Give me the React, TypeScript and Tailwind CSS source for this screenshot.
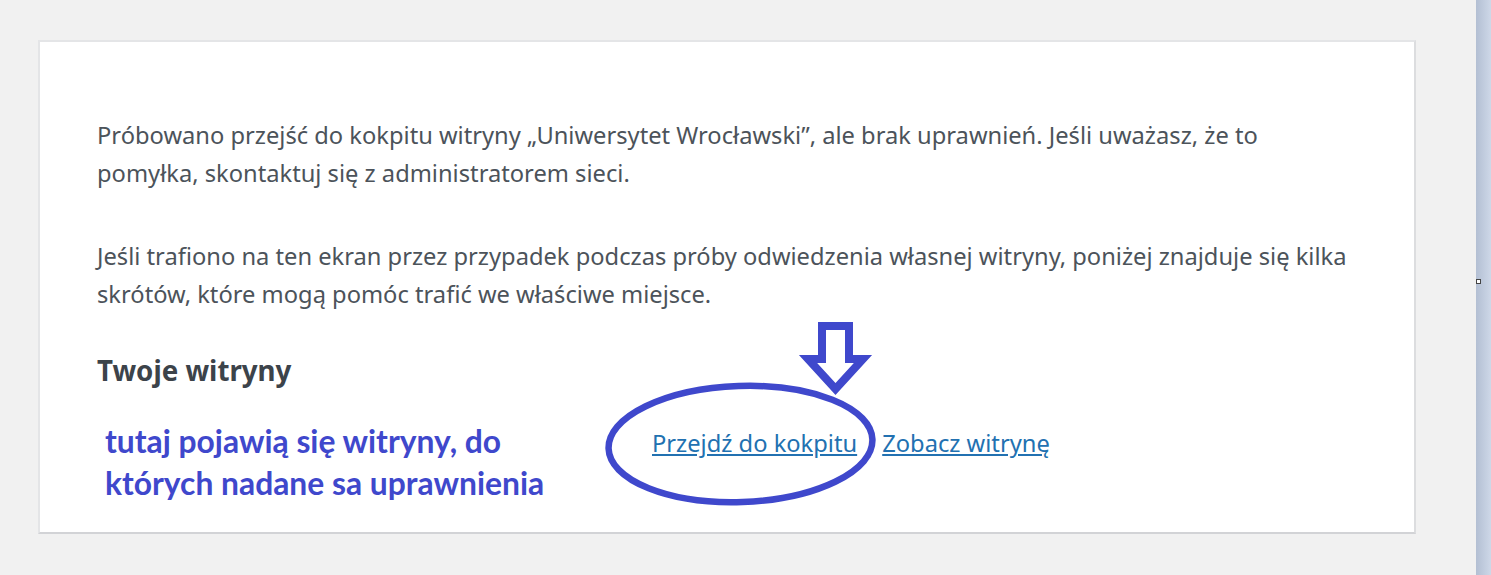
export default function App() {
  return (
    <div className="relative flex h-[575px] w-full overflow-hidden bg-[#f1f1f1] font-['Noto_Sans',sans-serif]">
      <div className="flex-1 pl-[38px] pt-[40px]">
        {/* Error card */}
        <div className="h-[494px] w-[1378px] border-2 border-[#e4e5e7] border-b-[#d2d3d6] border-r-[#dcdddf] bg-white pl-[57px] pt-[74px] text-[23.7px] leading-[38px] text-[#4c535a]">
          <p>
            Próbowano przejść do kokpitu witryny „Uniwersytet Wrocławski”, ale brak uprawnień. Jeśli uważasz, że to
            <br />
            pomyłka, skontaktuj się z administratorem sieci.
          </p>
          <p className="mt-[45px]">
            Jeśli trafiono na ten ekran przez przypadek podczas próby odwiedzenia własnej witryny, poniżej znajduje się kilka
            <br />
            skrótów, które mogą pomóc trafić we właściwe miejsce.
          </p>
          <h3 className="mt-[37px] text-[27.7px] font-bold leading-[40px] text-[#3c434a]">Twoje witryny</h3>
          <div className="mt-[30px] flex">
            <div className="ml-[8px] w-[547px] font-['Lato',sans-serif] text-[31.8px] font-bold leading-[42px] text-[#3f48cc]">
              tutaj pojawią się witryny, do
              <br />
              których nadane sa uprawnienia
            </div>
            <div className="flex items-center gap-[6px] self-start pt-[2px] text-[23.7px] leading-[42px]">
              <a href="#" className="text-[#2271b1] underline underline-offset-2">
                Przejdź do kokpitu
              </a>
              <span className="text-[#dcdcde]">|</span>
              <a href="#" className="text-[#2271b1] underline underline-offset-2">
                Zobacz witrynę
              </a>
            </div>
          </div>
        </div>
      </div>

      {/* Window scrollbar strip */}
      <div className="w-[15px] bg-gradient-to-r from-[#b3bfd3] to-[#ced8e8]" />

      {/* Hand-drawn annotation on top of the page */}
      <svg
        className="pointer-events-none absolute left-0 top-0"
        width="1491"
        height="575"
        viewBox="0 0 1491 575"
        fill="none"
      >
        <polygon
          points="822,326 849,326 849,359 863,359 835.5,389 808,359 822,359"
          stroke="#3f48cc"
          strokeWidth="8"
          strokeLinejoin="miter"
        />
        <ellipse
          cx="740.5"
          cy="444"
          rx="132"
          ry="58"
          stroke="#3f48cc"
          strokeWidth="6.5"
          transform="rotate(-2 740.5 444)"
        />
      </svg>

      <div className="absolute left-[1476px] top-[279px] h-[5px] w-[5px] border border-[#444] bg-white" />
    </div>
  );
}
